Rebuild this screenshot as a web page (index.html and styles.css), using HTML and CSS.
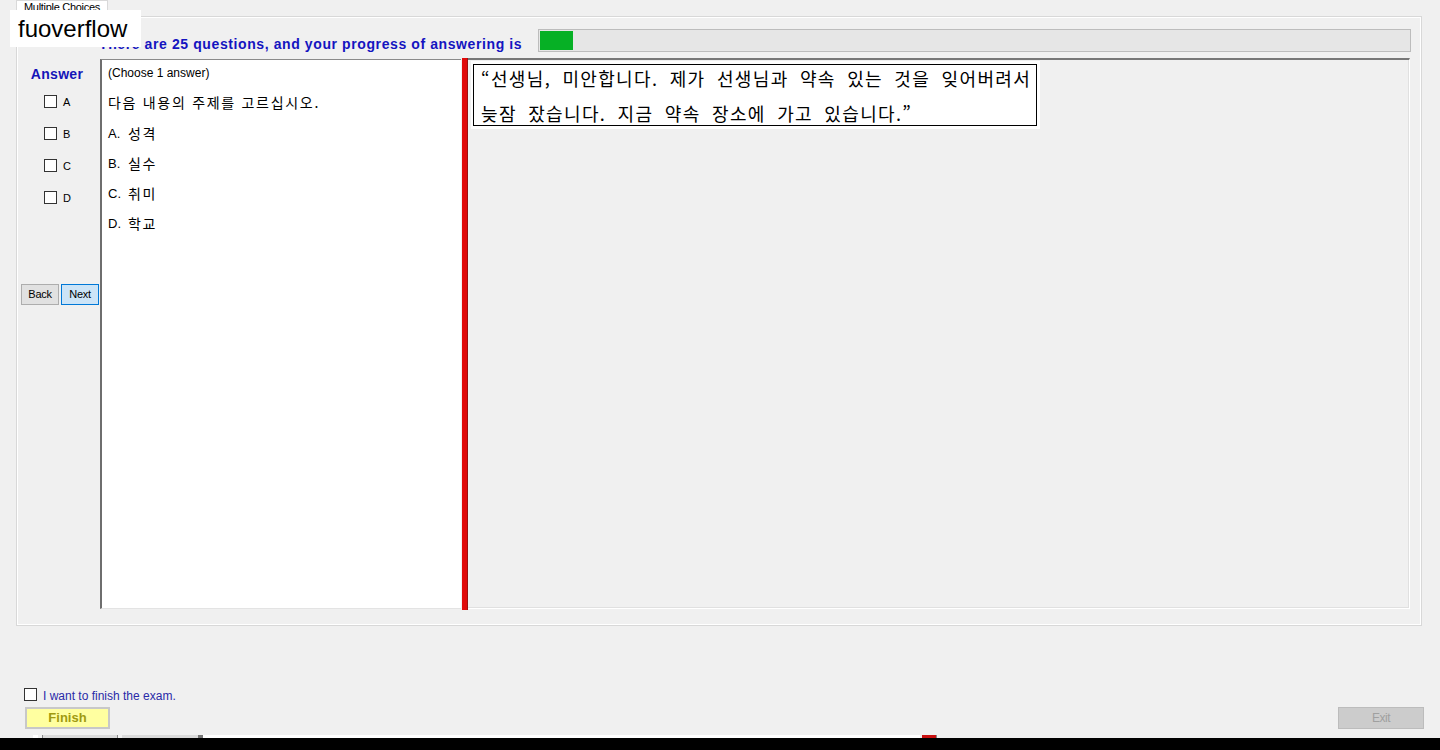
FILE: index.html
```html
<!DOCTYPE html>
<html lang="ko">
<head>
<meta charset="utf-8">
<title>Multiple Choices</title>
<link rel="stylesheet" href="styles.css">
</head>
<body>
<div class="page">
  <div class="tabs"><div class="tab">Multiple Choices</div></div>
  <div class="panel">
    <div class="head">
      <div class="head-text">There are 25 questions, and your progress of answering is</div>
      <div class="bar"><div class="bar-fill" style="width:33px"></div></div>
    </div>
    <div class="body">
      <div class="answers">
        <div class="answer-title">Answer</div>
        <div class="opts">
          <label class="opt"><span class="box"></span><span>A</span></label>
          <label class="opt"><span class="box"></span><span>B</span></label>
          <label class="opt"><span class="box"></span><span>C</span></label>
          <label class="opt"><span class="box"></span><span>D</span></label>
        </div>
        <div class="nav">
          <div class="btn">Back</div>
          <div class="btn btn-active">Next</div>
        </div>
      </div>
      <div class="question">
        <div class="q-hint">(Choose 1 answer)</div>
        <div class="q-line q-title ko">다음 내용의 주제를 고르십시오.</div>
        <div class="q-line"><span class="letter">A.</span><span class="ko">성격</span></div>
        <div class="q-line"><span class="letter">B.</span><span class="ko">실수</span></div>
        <div class="q-line"><span class="letter">C.</span><span class="ko">취미</span></div>
        <div class="q-line"><span class="letter">D.</span><span class="ko">학교</span></div>
      </div>
      <div class="splitter"></div>
      <div class="reading">
        <div class="passage-wrap">
          <div class="passage"><p class="ko">“선생님, 미안합니다. 제가 선생님과 약속 있는 것을 잊어버려서<br>늦잠 잤습니다. 지금 약속 장소에 가고 있습니다.”</p></div>
        </div>
      </div>
    </div>
  </div>
  <div class="footer">
    <div class="footer-left">
      <label class="finish-check"><span class="box"></span><span class="finish-label">I want to finish the exam.</span></label>
      <div class="finish">Finish</div>
    </div>
    <div class="exit">Exit</div>
  </div>
  <div class="strip">
    <span class="s-white s1"></span><span class="s-gap s2"></span><span class="s-dark"></span><span class="s-light s3"></span><span class="s-dark"></span><span class="s-gap s4"></span><span class="s-light s5"></span><span class="s-dark s6"></span><span class="s-white s7"></span><span class="s-gap s8"></span><span class="s-red"></span><span class="s-dark"></span>
  </div>
  <div class="black"></div>
  <div class="watermark">fuoverflow</div>
</div>
</body>
</html>
```
FILE: styles.css
```css
* { box-sizing: border-box; }
html, body { margin: 0; padding: 0; }
body {
  background: #f0f0f0;
  font-family: "Liberation Sans", Arial, sans-serif;
  color: #000;
  width: 1440px;
  height: 750px;
  overflow: hidden;
}
.ko { font-family: "Noto Sans CJK KR", "Liberation Sans", sans-serif; }
.page { position: relative; width: 1440px; height: 750px; display: flex; flex-direction: column; }

.tabs { height: 16px; padding-left: 16px; display: flex; }
.tab {
  width: 92px; height: 17px;
  background: #fff;
  border: 1px solid #d9d9d9; border-bottom: none;
  font-size: 11px; line-height: 12px;
  padding-left: 7px; color: #000;
  position: relative; z-index: 1;
  white-space: nowrap; overflow: hidden; letter-spacing: -0.3px;
}

.panel {
  margin-left: 16px;
  width: 1406px; height: 610px;
  border: 1px solid #d8d8d8;
  box-shadow: inset -1px -1px 0 #fff, inset 1px 1px 0 #fff;
  display: flex; flex-direction: column;
}
.head { display: flex; margin-top: 12px; height: 22px; }
.head-text {
  width: 521px; padding-left: 82px;
  font-size: 14px; font-weight: bold; color: #1414c0; letter-spacing: 0.6px;
  line-height: 16px; padding-top: 7px; white-space: nowrap;
}
.bar {
  width: 873px; height: 23px;
  background: #e6e6e6; border: 1px solid #bcbcbc;
  padding: 1px;
}
.bar-fill { height: 19px; background: #06b025; }

.body { display: flex; margin-top: 7px; height: 552px; }
.answers { width: 83px; display: flex; flex-direction: column; align-items: center; }
.answer-title {
  font-size: 14px; font-weight: bold; color: #1414b8; letter-spacing: 0.3px;
  line-height: 16px; margin-top: 8px; margin-right: 3px;
}
.opts { display: flex; flex-direction: column; gap: 19px; margin-top: 13px; align-self: flex-start; padding-left: 27px; }
.opt { display: flex; align-items: center; gap: 6px; font-size: 11px; height: 13px; }
.box { width: 13px; height: 13px; border: 1px solid #333; background: #fff; display: inline-block; flex: none; }
.nav { display: flex; gap: 2px; margin-top: 80px; align-self: flex-start; padding-left: 4px; }
.btn {
  width: 38px; height: 21px;
  border: 1px solid #adadad; background: #e1e1e1;
  font-size: 11px; line-height: 19px; text-align: center; letter-spacing: -0.3px;
}
.btn-active { border-color: #0078d7; background: #cce4f7; }

.question {
  width: 361px; height: 550px; margin-top: 1px;
  background: #fff;
  border-left: 2px solid #6e6e6e; border-top: 1px solid #8a8a8a;
  border-bottom: 1px solid #e3e3e3;
  padding-left: 6px;
}
.q-hint { font-size: 12px; line-height: 14px; height: 27px; padding-top: 6px; }
.q-line { font-size: 14px; line-height: 30px; height: 30px; display: flex; align-items: center; }
.q-title { letter-spacing: 1.7px; height: 30px; margin-bottom: 1px; }
.letter { font-family: "Liberation Sans", Arial, sans-serif; width: 20px; font-size: 13px; line-height: 16px; padding-top: 1px; }
.q-line .ko { letter-spacing: 1.5px; line-height: 20px; }

.splitter {
  width: 7px; height: 552px;
  background: #e00a0a;
  border-right: 1px solid #9a1010;
  border-left: 1px solid #f0f0f0;
}
.reading {
  width: 942px; height: 551px;
  background: #f0f0f0;
  border-top: 2px solid #777;
  border-right: 1px solid #fff;
  border-bottom: 1px solid #fff;
  box-shadow: inset 0 -1px 0 #e0e0e0, inset -1px 0 0 #e0e0e0;
  padding-left: 3px; padding-top: 1px;
}
.passage-wrap { width: 569px; height: 68px; background: #fff; padding: 3px 3px 3px 2px; }
.passage { height: 62px; border: 1px solid #000; padding-left: 7px; overflow: visible; }
.passage p { margin: -4px 0 0; font-size: 18px; line-height: 35px; word-spacing: 5px; letter-spacing: 1.35px; white-space: nowrap; }

.footer {
  height: 109px; display: flex; justify-content: space-between; align-items: flex-end;
  padding: 0 17px 6px 24px;
}
.footer-left { display: flex; flex-direction: column; gap: 5px; }
.finish-check { display: flex; align-items: flex-start; gap: 6px; font-size: 12px; color: #2a2aa8; height: 14px; }
.finish-label { margin-top: 1px; line-height: 14px; }
.finish {
  margin-left: 1px;
  width: 85px; height: 22px;
  background: #ffffa0; border: 2px solid #c8c8c8;
  font-size: 13px; font-weight: bold; color: #a09a10;
  text-align: center; line-height: 18px;
}
.exit {
  width: 86px; height: 22px; margin-right: -1px;
  background: #cccccc; border: 1px solid #bcbcbc;
  font-size: 12px; color: #a0a0a0; text-align: center; line-height: 20px; letter-spacing: -0.5px;
}

.strip { height: 3px; display: flex; }
.strip span { height: 3px; display: block; }
.s1 { margin-left: 33px; width: 5px; }
.s-white { background: #fff; }
.s-dark { width: 1px; background: #888; }
.s-light { background: #dadada; }
.s2 { width: 4px; }
.s3 { width: 74px; }
.s4 { width: 4px; }
.s5 { width: 76px; }
.s6 { width: 5px; background: #777; }
.s7 { width: 717px; }
.s8 { width: 2px; }
.s-red { width: 14px; background: #c81010; }
.black { height: 12px; background: #000; }

.watermark {
  position: absolute; left: 10px; top: 10px;
  width: 131px; height: 37px;
  background: #fff;
  font-family: "Liberation Sans", Arial, sans-serif;
  font-size: 24px; line-height: 37px; padding-left: 8px;
  color: #000; z-index: 5;
}
```
